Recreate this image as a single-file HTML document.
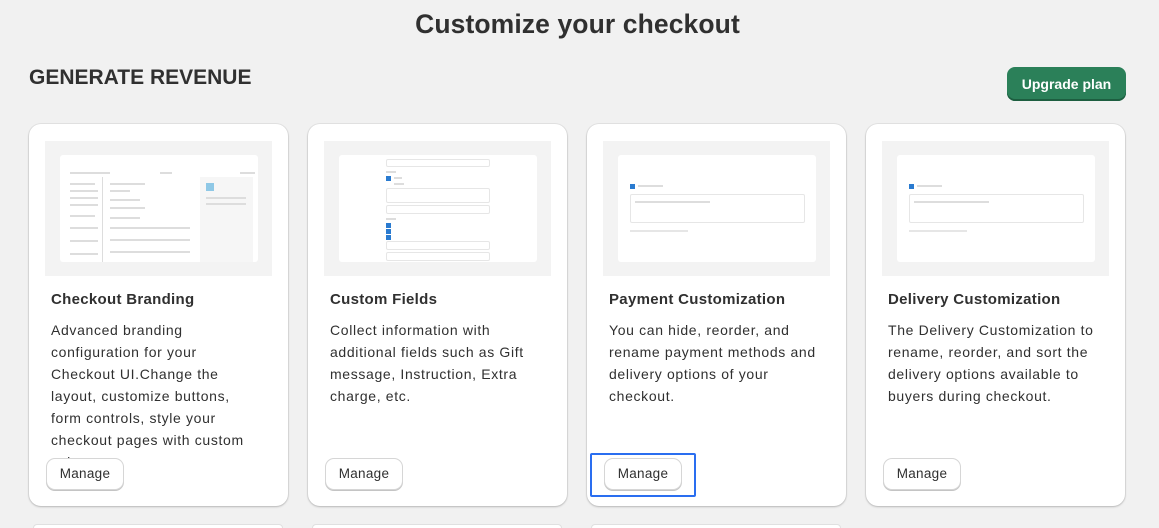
<!DOCTYPE html>
<html><head><meta charset="utf-8"><style>
*{box-sizing:border-box;margin:0;padding:0}
html,body{width:1159px;height:528px;overflow:hidden}
body{background:#f1f1f1;font-family:"Liberation Sans",sans-serif;color:#303030;position:relative}
h1{position:absolute;left:0;width:1155px;top:9px;text-align:center;font-size:26.5px;font-weight:bold;color:#303030;letter-spacing:0.1px}
h2{position:absolute;left:29px;top:66px;font-size:21px;font-weight:bold;color:#303030;letter-spacing:0px}
.up{position:absolute;left:1007px;top:67px;width:119px;height:34px;background:#2b8059;border-radius:8px;color:#fff;font-weight:bold;font-size:14px;text-align:center;line-height:34px;box-shadow:inset 0 -2px 0 #1d5e40}
.card{position:absolute;top:124px;width:259px;height:382px;background:#fff;border-radius:12px;box-shadow:0 1px 2px rgba(0,0,0,.2),0 0 0 1px rgba(0,0,0,.05);overflow:hidden}
.img{position:absolute;left:16px;top:17px;width:227px;height:135px;background:#f3f3f3}
.in{position:absolute;left:15px;top:14px;width:198px;height:107px;background:#fff;border-radius:3px}
.t{position:absolute;left:22px;top:167px;font-size:15px;font-weight:bold;letter-spacing:0.3px}
.d{position:absolute;left:22px;top:195px;width:224px;font-size:14px;line-height:22px;letter-spacing:0.65px}
.btn{position:absolute;z-index:2;left:18px;top:335px;width:76px;height:30px;background:#fff;border-radius:8px;box-shadow:0 0 0 1px #d6d6d6,0 1px 0 1px #c4c4c4;font-size:13.5px;text-align:center;line-height:30px;color:#303030;letter-spacing:0.3px}
.g{position:absolute;background:#ddd;height:2px}
.f{position:absolute;border:1px solid #e6e6e6;border-radius:2px;background:#fff}
.cb{position:absolute;width:5px;height:5px;background:#2a7bd0}
.card2{position:absolute;top:525px;height:3px;background:#fff;border-radius:10px 10px 0 0;box-shadow:0 0 0 1px #e0e0e0}
.focus{position:absolute;left:590px;top:453px;width:106px;height:44px;border:2px solid #2a6ef0;border-radius:2px;z-index:3}
</style></head><body>
<h1>Customize your checkout</h1>
<h2>GENERATE REVENUE</h2>
<div class="up">Upgrade plan</div>

<div class="card" style="left:29px">
 <div class="img"><div class="in">
  <div class="g" style="left:10px;top:17px;width:40px"></div>
  <div class="g" style="left:100px;top:17px;width:12px"></div>
  <div class="g" style="left:180px;top:17px;width:15px"></div>
  <div style="position:absolute;left:42px;top:22px;width:1px;height:85px;background:#ddd"></div>
  <div style="position:absolute;left:140px;top:22px;width:53px;height:85px;background:#f6f6f6"></div>
  <div style="position:absolute;left:146px;top:28px;width:8px;height:8px;background:#8fc8e6"></div>
  <div class="g" style="left:10px;top:28px;width:25px"></div>
  <div class="g" style="left:10px;top:35px;width:28px"></div>
  <div class="g" style="left:10px;top:42px;width:28px"></div>
  <div class="g" style="left:10px;top:49px;width:28px"></div>
  <div class="g" style="left:10px;top:60px;width:25px"></div>
  <div class="g" style="left:10px;top:72px;width:28px"></div>
  <div class="g" style="left:10px;top:85px;width:28px"></div>
  <div class="g" style="left:10px;top:98px;width:28px"></div>
  <div class="g" style="left:50px;top:28px;width:35px"></div>
  <div class="g" style="left:50px;top:35px;width:20px"></div>
  <div class="g" style="left:50px;top:44px;width:30px"></div>
  <div class="g" style="left:50px;top:52px;width:35px"></div>
  <div class="g" style="left:50px;top:62px;width:30px"></div>
  <div class="g" style="left:50px;top:72px;width:80px"></div>
  <div class="g" style="left:50px;top:84px;width:80px"></div>
  <div class="g" style="left:50px;top:96px;width:80px"></div>
  <div class="g" style="left:146px;top:42px;width:40px"></div>
  <div class="g" style="left:146px;top:48px;width:40px"></div>
 </div></div>
 <div class="t">Checkout Branding</div>
 <div class="d" style="width:205px">Advanced branding configuration for your Checkout UI.Change the layout, customize buttons, form controls, style your checkout pages with custom colors.</div>
 <div class="btn">Manage</div>
</div>

<div class="card" style="left:308px">
 <div class="img"><div class="in">
  <div class="f" style="left:47px;top:4px;width:104px;height:8px"></div>
  <div class="g" style="left:47px;top:16px;width:10px"></div>
  <div class="cb" style="left:47px;top:21px"></div>
  <div class="g" style="left:55px;top:22px;width:8px"></div>
  <div class="g" style="left:55px;top:28px;width:10px"></div>
  <div class="f" style="left:47px;top:33px;width:104px;height:15px"></div>
  <div class="f" style="left:47px;top:50px;width:104px;height:9px"></div>
  <div class="g" style="left:47px;top:63px;width:10px"></div>
  <div class="cb" style="left:47px;top:68px"></div>
  <div class="cb" style="left:47px;top:74px"></div>
  <div class="cb" style="left:47px;top:80px"></div>
  <div class="f" style="left:47px;top:86px;width:104px;height:9px"></div>
  <div class="f" style="left:47px;top:97px;width:104px;height:9px"></div>
 </div></div>
 <div class="t">Custom Fields</div>
 <div class="d" style="width:205px">Collect information with additional fields such as Gift message, Instruction, Extra charge, etc.</div>
 <div class="btn">Manage</div>
</div>

<div class="card" style="left:587px">
 <div class="img"><div class="in">
  <div class="cb" style="left:12px;top:29px"></div>
  <div class="g" style="left:20px;top:30px;width:25px"></div>
  <div class="f" style="left:12px;top:39px;width:175px;height:29px"></div>
  <div class="g" style="left:17px;top:46px;width:75px"></div>
  <div class="g" style="left:12px;top:75px;width:58px;background:#e6e6e6"></div>
 </div></div>
 <div class="t">Payment Customization</div>
 <div class="d">You can hide, reorder, and rename payment methods and delivery options of your checkout.</div>
 <div class="btn">Manage</div>
</div>

<div class="card" style="left:866px">
 <div class="img"><div class="in">
  <div class="cb" style="left:12px;top:29px"></div>
  <div class="g" style="left:20px;top:30px;width:25px"></div>
  <div class="f" style="left:12px;top:39px;width:175px;height:29px"></div>
  <div class="g" style="left:17px;top:46px;width:75px"></div>
  <div class="g" style="left:12px;top:75px;width:58px;background:#e6e6e6"></div>
 </div></div>
 <div class="t">Delivery Customization</div>
 <div class="d">The Delivery Customization to rename, reorder, and sort the delivery options available to buyers during checkout.</div>
 <div class="btn">Manage</div>
</div>

<div class="focus"></div>
<div class="card2" style="left:34px;width:248px"></div>
<div class="card2" style="left:313px;width:248px"></div>
<div class="card2" style="left:592px;width:248px"></div>
</body></html>
